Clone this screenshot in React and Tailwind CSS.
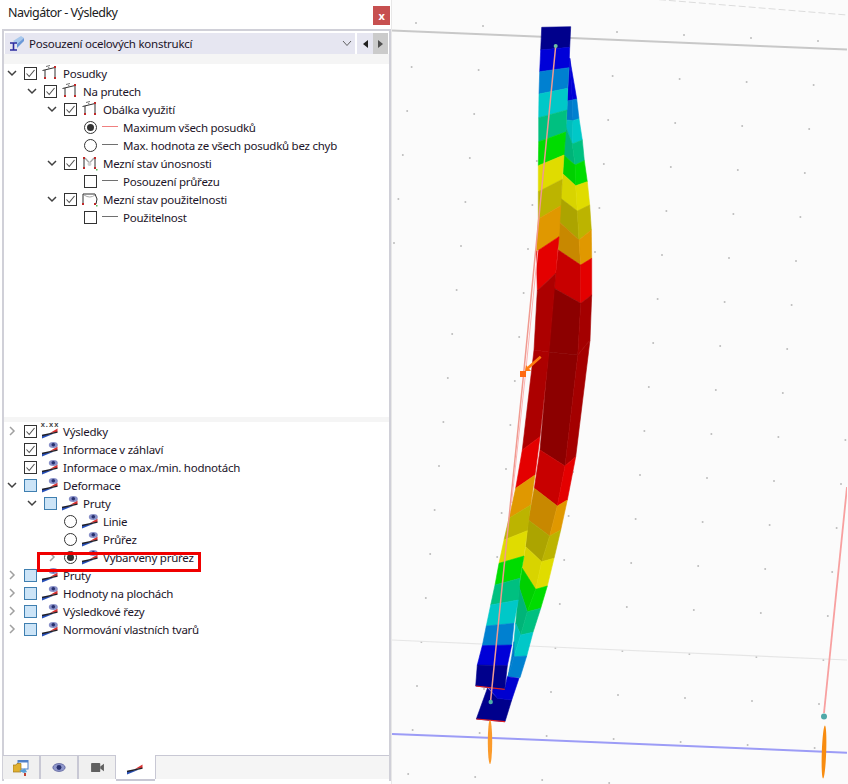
import React from "react";

// Colour bands of the deformed member: [left flange, web, right flange]
const SHADES = {
  navy: ["#00008c", "#00008c", "#00008c"],
  blue: ["#0000d8", "#0000d0", "#0000d8"],
  sky: ["#0080d0", "#0078c8", "#0080d0"],
  cyan: ["#00c8c8", "#00bcbc", "#00c8c8"],
  teal: ["#00c080", "#00b478", "#00c080"],
  green: ["#00dc00", "#00d000", "#00dc00"],
  yellow: ["#e0dc00", "#d8d400", "#e0dc00"],
  olive: ["#bcb400", "#aca400", "#bcb400"],
  orange: ["#e09800", "#c88800", "#e09800"],
  red: ["#e40000", "#c80000", "#e40000"],
  dark: ["#ac0000", "#8c0000", "#a40000"],
};

const FLANGE_STOPS = [
  [542.7, 27.3, 571.7, 26.7], [541.7, 50, 570.7, 47.3], [540.7, 71.7, 570, 67.7], [540, 94, 568.7, 88.3],
  [539.7, 117.7, 568, 110], [539.7, 141.7, 566.7, 132], [539.3, 165.7, 565, 155], [539.3, 191.7, 563.3, 179.3],
  [539.3, 219, 561.7, 205.7], [537.3, 251.7, 560, 236.7], [538.3, 290.7, 556.7, 273.3], [535, 350, 550, 352],
  [523.3, 450, 541, 436.7], [516.7, 488.3, 536, 475], [510, 518.3, 531.7, 505], [505, 540, 528.3, 530.7],
  [500, 563.3, 525, 556], [496, 585, 521, 578.3], [491.7, 605, 519.3, 600], [487.3, 626, 515, 623.3],
  [483.3, 645.7, 512.7, 645], [478.3, 665, 508.3, 665.7], [476.7, 686, 505.7, 689.3],
];
const FLANGE_COLORS = ["navy", "blue", "sky", "cyan", "teal", "green", "yellow", "olive", "orange", "red", "dark", "dark", "red", "orange", "olive", "yellow", "green", "teal", "cyan", "sky", "blue", "navy"];

const WEB_STOPS = [
  [570.7, 58.3, 570.7, 58.3, 570.7, 58.3], [568.3, 101, 573.3, 100, 577.7, 99], [567.7, 120, 574, 120.7, 580, 118.7],
  [566.7, 126.7, 573.3, 144, 583.3, 140], [564.7, 155, 576, 165, 585.3, 160.7], [564, 174, 576.7, 185.7, 588.3, 181.7],
  [561.7, 198.3, 578.3, 211, 590.7, 205], [560, 221.7, 580, 240, 592.3, 230], [559.3, 250, 581.7, 265, 592.7, 258.3],
  [555, 288.3, 581.7, 303.3, 592.7, 295], [549.5, 352, 578.8, 355, 591, 340], [541, 450, 566, 466, 576.7, 456.7],
  [535.3, 488.3, 558.3, 506, 568.3, 500], [529.3, 520, 550.7, 536, 561.7, 530], [526.7, 546.7, 542.7, 561.7, 555, 558.3],
  [523.3, 568.3, 536.7, 589.3, 548.3, 586], [520, 586.7, 528.3, 611.7, 541.7, 608.3], [516.7, 623.3, 521.7, 635, 534, 632.3],
  [515, 641.7, 515, 656.7, 527.7, 656], [512.7, 656.7, 509, 676.7, 521, 677.7],
];
const WEB_COLORS = ["blue", "sky", "cyan", "teal", "green", "yellow", "olive", "orange", "red", "dark", "dark", "red", "orange", "olive", "yellow", "green", "teal", "cyan", "sky"];

const Band = ({ points, color }) => <polygon points={points.join(" ")} fill={color} stroke={color} strokeWidth="0.6" />;

const Member = () => (
  <g>
    {WEB_COLORS.map((name, i) => {
      const a = WEB_STOPS[i];
      const b = WEB_STOPS[i + 1];
      return (
        <g key={i}>
          <Band color={SHADES[name][1]} points={[a[0], a[1], a[2], a[3], b[2], b[3], b[0], b[1]]} />
          <Band color={SHADES[name][2]} points={[a[2], a[3], a[4], a[5], b[4], b[5], b[2], b[3]]} />
        </g>
      );
    })}
    <Band color="#00008c" points={[488.5, 688, 498.3, 698.3, 512.7, 700, 506, 721.7, 477.3, 719]} />
    <Band color="#0000d0" points={[490, 688.3, 505.7, 689.3, 508.3, 676.7, 520, 678.3, 512.7, 700, 498.3, 698.3]} />
    {FLANGE_COLORS.map((name, i) => {
      const a = FLANGE_STOPS[i];
      const b = FLANGE_STOPS[i + 1];
      return <Band key={i} color={SHADES[name][0]} points={[a[0], a[1], a[2], a[3], b[2], b[3], b[0], b[1]]} />;
    })}
    <line x1="476.7" y1="686" x2="505.7" y2="689.3" stroke="#e02020" strokeWidth="1.2" />
    <line x1="477.3" y1="719" x2="506" y2="721.7" stroke="#e02020" strokeWidth="1.2" />
  </g>
);

const Canvas = () => {
  // grid points of the work plane
  const dots = [];
  for (let i = -2; i < 8; i++) {
    for (let j = -1; j < 19; j++) {
      dots.push([484 + 67 * i - 4.4 * j, 26 + 3 * i + 44 * j]);
    }
  }
  return (
    <div className="flex-1 h-[784px] bg-[#fbfbfb] overflow-hidden">
      <svg width="455" height="784" viewBox="393 0 455 784" className="block blur-[0.5px]">
        {dots.map(([x, y], i) => (
          <circle key={i} cx={x} cy={y} r="1" fill="#bcbcbc" />
        ))}
        <line x1="393" y1="30.5" x2="848" y2="49.6" stroke="#c8c8c8" strokeWidth="2" />
        <line x1="640" y1="-2" x2="848" y2="15" stroke="#dcdcdc" strokeWidth="1" strokeDasharray="7 3" />
        <line x1="393" y1="640" x2="848" y2="660" stroke="#e6e6e6" strokeWidth="1.2" />
        <line x1="393" y1="733.9" x2="848" y2="752.7" stroke="#9c9cf6" strokeWidth="2" />
        <Member />
        <polyline points="556.7,46 536.7,250 524.7,373 511.5,503 491.5,702" fill="none" stroke="#f09a90" strokeWidth="1.5" />
        <polyline points="538.9,250 526.6,373 512.5,503" fill="none" stroke="#fbb4b4" strokeWidth="1" />
        <line x1="541.7" y1="356.7" x2="529" y2="368" stroke="#ff7a10" strokeWidth="2.6" />
        <polygon points="527,365 532,371 526,371" fill="#ff7a10" />
        <rect x="521" y="371" width="6" height="6" fill="#ff6a10" />
        <circle cx="556.7" cy="46" r="2" fill="#70c0a0" />
        <circle cx="491.7" cy="702" r="2.2" fill="#50b0a8" />
        <ellipse cx="491" cy="742" rx="2.2" ry="22" fill="#fb9a2a" />
        <line x1="848" y1="487" x2="825" y2="713" stroke="#f8a0a0" strokeWidth="1.8" />
        <circle cx="825" cy="716.5" r="3" fill="#50a8a8" />
        <ellipse cx="825" cy="752" rx="2.2" ry="26.5" fill="#f88c10" transform="rotate(2 825 752)" />
      </svg>
    </div>
  );
};

// ---- tree icons

const DesignIcon = ({ kind }) => (
  <svg width="18" height="16" viewBox="0 0 18 16" className="shrink-0 overflow-visible">
    {kind === "design" && (
      <g>
        <path d="M3 5V13M13 2V13M0.5 5.5L13 2.5" stroke="#303030" strokeWidth="1" fill="none" />
        <path d="M4 1.5L8 0.5M6 2.5L8 3.5" stroke="#707070" strokeWidth="1" fill="none" />
      </g>
    )}
    {kind === "uls" && (
      <g>
        <path d="M2 3V13M13 3V13" stroke="#303030" strokeWidth="1" fill="none" />
        <path d="M3 3L7.5 8L12 3" stroke="#a8a8a8" strokeWidth="1.4" fill="none" />
        <circle cx="7.5" cy="9" r="2" fill="#d0d0d0" />
        <rect x="1" y="2" width="2" height="2" fill="#c02828" />
        <rect x="12" y="2" width="2" height="2" fill="#c02828" />
        <rect x="14" y="14" width="1.5" height="1.5" fill="#50b050" />
      </g>
    )}
    {kind === "sls" && (
      <g>
        <path d="M1 3V13M1 3H13M13 3L15 8L14 13" stroke="#303030" strokeWidth="1" fill="none" />
        <path d="M2 4Q8 8 13 4" stroke="#a8a8a8" strokeWidth="1" fill="none" />
        <rect x="14" y="14" width="1.5" height="1.5" fill="#50b050" />
      </g>
    )}
    <rect x={kind === "sls" ? 0 : kind === "uls" ? 1 : 2} y="12" width="2" height="2" fill="#c02828" />
    <rect x="12" y="12" width="2" height="2" fill="#c02828" />
    {kind === "design" && <rect x="12" y="1" width="2" height="2" fill="#c02828" />}
  </svg>
);

const ResultIcon = ({ eye = true, label }) => (
  <svg width="18" height="16" viewBox="0 0 18 16" className="shrink-0 overflow-visible">
    <polygon points="0,12 0,15.5 11,11" fill="#2850b8" />
    <polygon points="15.5,5.5 15.5,9 8,10" fill="#d83030" />
    <path d="M0 12.5L15.5 9.2" stroke="#202028" strokeWidth="1.3" />
    {eye && (
      <g>
        <ellipse cx="11.3" cy="4" rx="4.5" ry="3" fill="#8890c8" />
        <circle cx="11.3" cy="3.8" r="1.8" fill="#283070" />
      </g>
    )}
    {label && (
      <text x="8" y="3.5" textAnchor="middle" fontSize="7.5" fontWeight="700" fill="#404040" fontFamily="Liberation Sans, sans-serif" letterSpacing="1">
        {label}
      </text>
    )}
  </svg>
);

const LineIcon = ({ color }) => (
  <svg width="18" height="16" viewBox="0 0 18 16" className="shrink-0">
    <line x1="0" y1="7.5" x2="16" y2="7.5" stroke={color} strokeWidth="1" />
  </svg>
);

// ---- tree controls

const Chevron = ({ state }) => (
  <span className="w-[20px] shrink-0 flex justify-start pl-[3px]">
    {state === "open" && (
      <svg width="10" height="10" viewBox="0 0 10 10">
        <path d="M1 3L5 7L9 3" stroke="#404040" strokeWidth="1.5" fill="none" />
      </svg>
    )}
    {state === "closed" && (
      <svg width="10" height="10" viewBox="0 0 10 10">
        <path d="M3 1L7 5L3 9" stroke="#a0a0a0" strokeWidth="1.5" fill="none" />
      </svg>
    )}
  </span>
);

const Toggle = ({ type }) => {
  if (type === "radio" || type === "radioOn") {
    return (
      <span className="w-[13px] h-[13px] shrink-0 rounded-full border border-[#333] bg-white flex items-center justify-center">
        {type === "radioOn" && <span className="w-[7px] h-[7px] rounded-full bg-[#333]" />}
      </span>
    );
  }
  if (type === "partial") return <span className="w-[13px] h-[13px] shrink-0 border border-[#3f7fb0] bg-[#cce4f7]" />;
  return (
    <span className="w-[13px] h-[13px] shrink-0 border border-[#333] bg-white flex items-center justify-center">
      {type === "check" && (
        <svg width="11" height="11" viewBox="0 0 11 11">
          <path d="M1.5 5.5L4.2 8.5L9.5 2" stroke="#505050" strokeWidth="1.1" fill="none" />
        </svg>
      )}
    </span>
  );
};

const INDENT = ["pl-0", "pl-[20px]", "pl-[40px]", "pl-[60px]"];

const Row = ({ level, chevron, toggle, icon, text }) => (
  <div className={`h-[18px] flex items-center ${INDENT[level]}`}>
    <Chevron state={chevron} />
    <Toggle type={toggle} />
    <span className="w-[22px] pl-[5px] shrink-0 flex items-center">{icon}</span>
    <span className="pl-[4px] pt-[2px] whitespace-nowrap">{text}</span>
  </div>
);

const Tabs = () => (
  <div className="h-[26px] -ml-[1px] flex items-stretch">
    <div className="w-[38px] h-[24px] bg-[#f0f0f0] border-t border-r-2 border-[#c8c8d4] flex items-center justify-center">
      <svg width="16" height="16" viewBox="0 0 16 16">
        <rect x="5" y="0" width="10" height="9" fill="#fff" stroke="#5080c8" />
        <rect x="5" y="0" width="10" height="2.5" fill="#5080c8" />
        <path d="M0 5H3L4 3.5H8V12H0Z" fill="#e0b030" stroke="#a07818" strokeWidth="0.7" />
        <path d="M6 11L12 8.5L14 12L11 13Z" fill="#58a0d8" />
        <rect x="11" y="13" width="2" height="3" fill="#c04030" />
      </svg>
    </div>
    <div className="w-[38px] h-[24px] bg-[#f0f0f0] border-t border-r-2 border-[#c8c8d4] flex items-center justify-center">
      <svg width="14" height="11" viewBox="0 0 16 12">
        <ellipse cx="8" cy="6" rx="7" ry="4.5" fill="#9098cc" stroke="#4a5090" strokeWidth="0.8" />
        <circle cx="8" cy="6" r="2.8" fill="#283070" />
      </svg>
    </div>
    <div className="w-[37px] h-[24px] bg-[#f0f0f0] border-t border-r border-[#c8c8d4] flex items-center justify-center">
      <svg width="15" height="11" viewBox="0 0 16 12">
        <rect x="1" y="1" width="10" height="10" rx="1" fill="#606060" />
        <polygon points="11,5 15,2 15,10 11,7" fill="#606060" />
      </svg>
    </div>
    <div className="w-[39px] h-[26px] bg-white border-b-2 border-[#c8c8d4] flex items-center justify-center">
      <ResultIcon eye={false} />
    </div>
    <div className="flex-1 h-[24px] bg-[#f5f5f5] border-t border-l border-[#c8c8d4]" />
  </div>
);

const TOP_ROWS = [
  { level: 0, chevron: "open", toggle: "check", icon: <DesignIcon kind="design" />, text: "Posudky" },
  { level: 1, chevron: "open", toggle: "check", icon: <DesignIcon kind="design" />, text: "Na prutech" },
  { level: 2, chevron: "open", toggle: "check", icon: <DesignIcon kind="design" />, text: "Obálka využití" },
  { level: 3, toggle: "radioOn", icon: <LineIcon color="#f08080" />, text: "Maximum všech posudků" },
  { level: 3, toggle: "radio", icon: <LineIcon color="#707070" />, text: "Max. hodnota ze všech posudků bez chyb" },
  { level: 2, chevron: "open", toggle: "check", icon: <DesignIcon kind="uls" />, text: "Mezní stav únosnosti" },
  { level: 3, toggle: "box", icon: <LineIcon color="#707070" />, text: "Posouzení průřezu" },
  { level: 2, chevron: "open", toggle: "check", icon: <DesignIcon kind="sls" />, text: "Mezní stav použitelnosti" },
  { level: 3, toggle: "box", icon: <LineIcon color="#707070" />, text: "Použitelnost" },
];

const BOTTOM_ROWS = [
  { level: 0, chevron: "closed", toggle: "check", icon: <ResultIcon eye={false} label="x.xx" />, text: "Výsledky" },
  { level: 0, toggle: "check", icon: <ResultIcon />, text: "Informace v záhlaví" },
  { level: 0, toggle: "check", icon: <ResultIcon />, text: "Informace o max./min. hodnotách" },
  { level: 0, chevron: "open", toggle: "partial", icon: <ResultIcon />, text: "Deformace" },
  { level: 1, chevron: "open", toggle: "partial", icon: <ResultIcon />, text: "Pruty" },
  { level: 2, toggle: "radio", icon: <ResultIcon />, text: "Linie" },
  { level: 2, toggle: "radio", icon: <ResultIcon />, text: "Průřez" },
  { level: 2, chevron: "closed", toggle: "radioOn", icon: <ResultIcon />, text: "Vybarvený průřez" },
  { level: 0, chevron: "closed", toggle: "partial", icon: <ResultIcon />, text: "Pruty" },
  { level: 0, chevron: "closed", toggle: "partial", icon: <ResultIcon />, text: "Hodnoty na plochách" },
  { level: 0, chevron: "closed", toggle: "partial", icon: <ResultIcon />, text: "Výsledkové řezy" },
  { level: 0, chevron: "closed", toggle: "partial", icon: <ResultIcon />, text: "Normování vlastních tvarů" },
];

export default function App() {
  return (
    <div className="w-[848px] h-[784px] flex bg-white overflow-hidden font-['Noto_Sans',sans-serif] text-[11.5px] tracking-[-0.25px] text-[#1c1428]">
      {/* Navigator panel */}
      <div className="w-[392px] h-[784px] shrink-0 flex flex-col border-r border-[#e8e8e8]">
        <div className="h-[29px] shrink-0 flex items-start justify-between pl-[8px] pr-[1px] pt-[6px]">
          <span className="-mt-[1px] text-[12.5px] tracking-[-0.5px] leading-[16px] text-[#202020]">Navigátor - Výsledky</span>
          <button className="w-[17px] h-[19px] bg-[#c75050] text-white text-[11px] font-bold leading-[17px]">x</button>
        </div>

        <div className="relative flex-1 min-h-0 mb-[3px] ml-[2px] flex flex-col border-t-2 border-l-2 border-r-2 border-[#d0d0d8] bg-white">
          <div className="h-[21px] mt-[2px] ml-[1px] mr-[1px] shrink-0 flex items-stretch bg-[#e6e6f1]">
            <span className="w-[24px] flex items-center justify-center shrink-0">
              <svg width="16" height="16" viewBox="0 0 16 16">
                <polygon points="4,5 12,0 15,2 8,8" fill="#a8c8ec" />
                <polygon points="8,8 15,2 15,5 8,12" fill="#6a98d8" />
                <path d="M1 7H8M1 14H8M4.5 7V14" stroke="#2c2ca0" strokeWidth="1.6" fill="none" />
              </svg>
            </span>
            <span className="flex-1 flex items-center whitespace-nowrap">Posouzení ocelových konstrukcí</span>
            <span className="w-[19px] flex items-center justify-center border-r-2 border-white">
              <svg width="10" height="8" viewBox="0 0 10 8">
                <path d="M1 1L5 5.5L9 1" stroke="#606060" strokeWidth="1" fill="none" />
              </svg>
            </span>
            <span className="w-[16px] flex items-center justify-center">
              <svg width="5" height="8" viewBox="0 0 5 8"><polygon points="5,0 5,8 0,4" fill="#202020" /></svg>
            </span>
            <span className="w-[15px] flex items-center justify-center bg-[#cbcbcb]">
              <svg width="5" height="8" viewBox="0 0 5 8"><polygon points="0,0 0,8 5,4" fill="#505050" /></svg>
            </span>
          </div>
          <div className="h-[10px] shrink-0 bg-[#f5f5f5]" />

          <div className="h-[353px] shrink-0">
            {TOP_ROWS.map((row) => (
              <Row key={row.text} {...row} />
            ))}
          </div>

          <div className="h-[5px] shrink-0 bg-[#f5f5f5]" />
          <div className="flex-1 min-h-0">
            {BOTTOM_ROWS.map((row) => (
              <Row key={row.text} {...row} />
            ))}
          </div>

          <Tabs />

          {/* red highlight drawn over the tree */}
          <div className="absolute left-[33px] top-[521px] w-[164px] h-[20px] border-[3px] border-[#f00000]" />
        </div>
      </div>

      <Canvas />
    </div>
  );
}
